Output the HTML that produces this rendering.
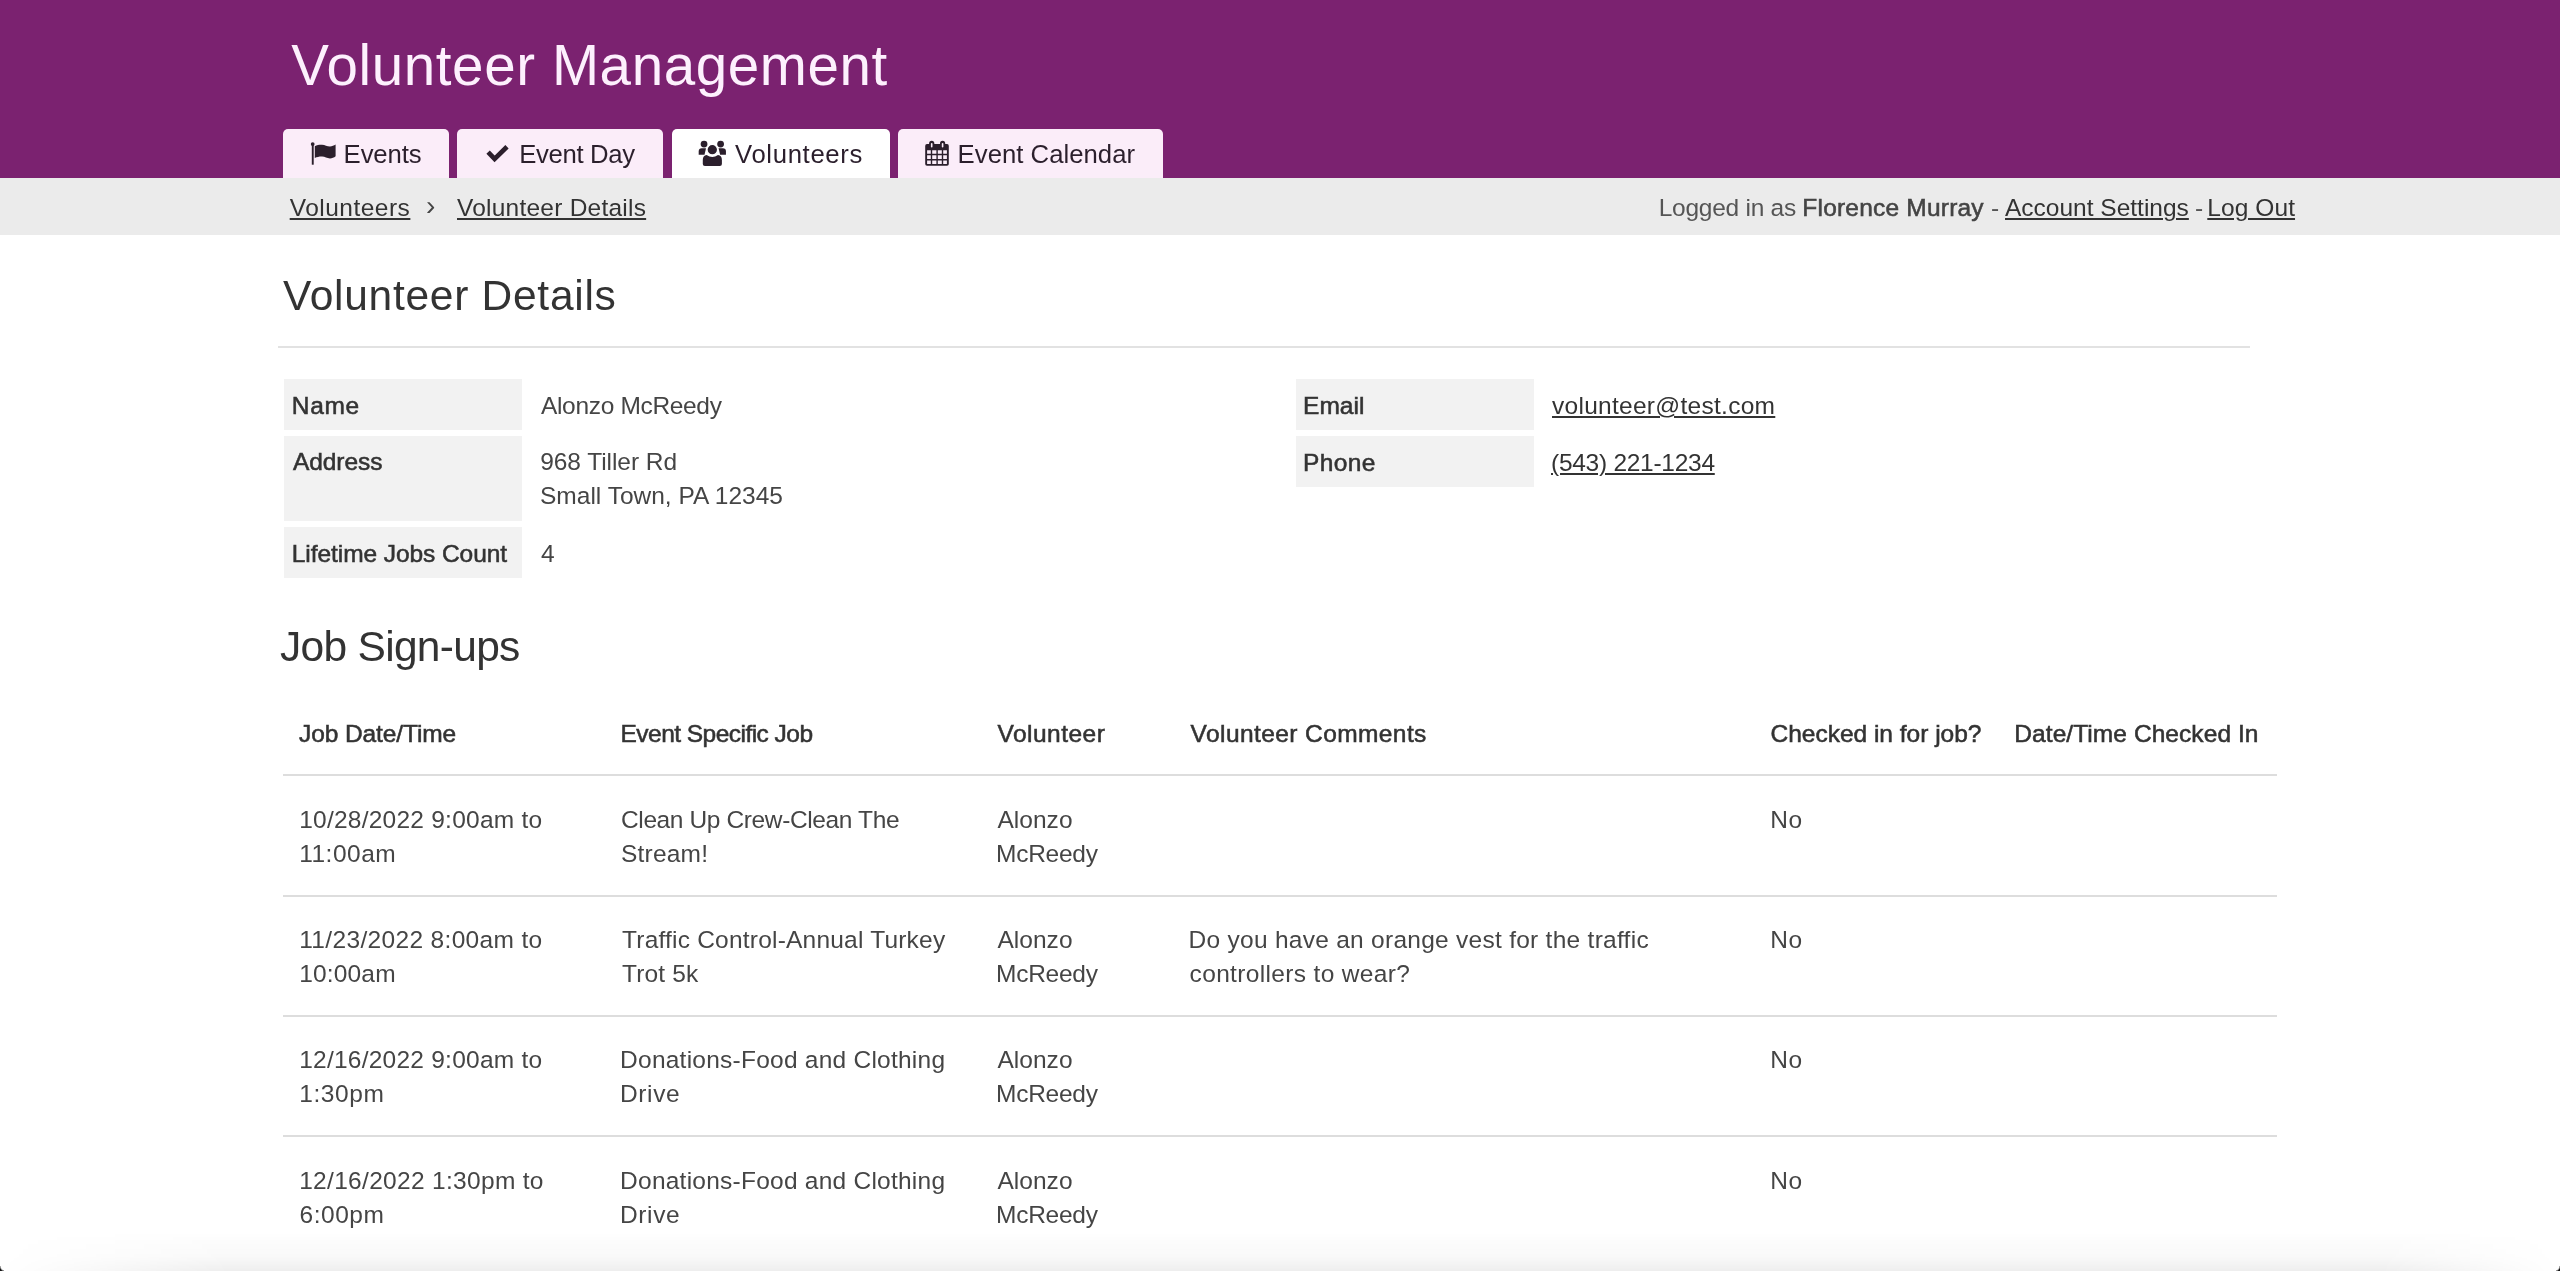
<!DOCTYPE html>
<html lang="en">
<head>
<meta charset="utf-8">
<title>Volunteer Management - Volunteer Details</title>
<style>
*{box-sizing:border-box;}
html,body{margin:0;padding:0;}
body{width:2560px;height:1271px;overflow:hidden;background:#fff;position:relative;
  font-family:"Liberation Sans",sans-serif;font-size:24.5px;line-height:34px;color:#454545;}
a{color:#333;text-decoration:underline;text-decoration-thickness:2px;text-underline-offset:2px;}
.sb{-webkit-text-stroke:.55px currentColor;}
.hdr,.crumb,main{will-change:transform;}
.hdr{position:absolute;left:0;top:0;width:2560px;height:178px;background:#7b2270;}
.hdr h1{position:absolute;top:30.5px;margin:0;font-weight:400;font-size:56.5px;line-height:70px;color:#fdf0fd;white-space:nowrap;}
.tabs{position:absolute;left:0;top:129px;height:49px;margin:0;padding:0;list-style:none;}
.tabs li{position:absolute;top:0;height:49px;background:#fbedf9;border-radius:5px 5px 0 0;color:#2b1f2c;font-size:25.7px;line-height:49px;white-space:nowrap;}
.tabs li.on{background:#fff;}
.tabs li a{position:absolute;top:1px;color:inherit;text-decoration:none;}
.tabs li svg{position:absolute;display:block;}
.crumb{position:absolute;left:0;top:178px;width:2560px;height:57px;background:#ebebeb;}
.crumb>*{position:absolute;top:13px;white-space:nowrap;}
.crumb .g{color:#555;}
.crumb .n{color:#444;}
h2{position:absolute;margin:0;font-weight:400;font-size:42.5px;line-height:50px;color:#333;white-space:nowrap;}
hr{position:absolute;left:278px;top:346px;width:1972px;height:2px;border:0;margin:0;background:#e2e2e2;}
table.kv{position:absolute;border-collapse:separate;border-spacing:0 6px;}
table.kv th{background:#f2f2f2;color:#333;font-weight:400;text-align:left;vertical-align:top;padding:9px 0 7px 10px;white-space:nowrap;width:238px;}
table.kv td{padding:9px 0 7px 19px;vertical-align:top;white-space:nowrap;}
table.kv tr:nth-child(1)>*{padding-top:10px;}
table.kv tr:nth-child(2)>*{padding-bottom:8px;}
table.kv.a tr:nth-child(3)>*{padding-top:10px;}
table.kv.b tr:nth-child(2)>*{padding:10px 0 7px 10px;}
table.kv.b tr:nth-child(2)>td{padding-left:19px;}
table.jobs{position:absolute;left:283px;top:690px;width:1994px;border-collapse:separate;border-spacing:0;table-layout:fixed;}
table.jobs th{font-weight:400;color:#333;text-align:left;height:86px;padding:27px 0 0 0;border-bottom:2px solid #ddd;white-space:nowrap;vertical-align:top;}
table.jobs td{padding:26px 0 0 0;border-top:2px solid #ddd;vertical-align:top;white-space:nowrap;height:120px;}
table.jobs tbody tr:nth-child(1) td{border-top:0;height:119px;padding-top:27px}
table.jobs tbody tr:nth-child(4) td{padding-top:27px}
.fade{position:absolute;left:0;top:1232px;width:2560px;height:39px;background:linear-gradient(to bottom,rgba(0,0,0,0) 0,rgba(0,0,0,.012) 25%,rgba(0,0,0,.024) 62%,rgba(0,0,0,.065) 100%);-webkit-mask-image:linear-gradient(to right,transparent 0,#000 9%,#000 93%,transparent 100%);mask-image:linear-gradient(to right,transparent 0,#000 9%,#000 93%,transparent 100%);}
.cnr{position:absolute;bottom:0;width:4px;height:5px;background:radial-gradient(ellipse at 100% 0,rgba(0,0,0,0) 3px,#111 4.5px);}
</style>
</head>
<body>
<header class="hdr">
  <h1 style="left:291.3px"><span style="letter-spacing:.62px">Volunteer Management</span></h1>
  <ul class="tabs">
    <li style="left:283px;width:166px"><svg style="left:27px;top:13px" width="27" height="24" viewBox="0 0 27 24"><g fill="#2b1f2c"><circle cx="2.7" cy="2.1" r="1.9"/><rect x="1.8" y="2.3" width="1.9" height="20.4"/><path d="M4.8,4.2C7,3 9.5,2.6 12,2.7C15,2.8 17,4.4 20,4.4C22,4.4 24,3.8 25.6,2.6L25.6,14.2C24,15.6 22,16.4 20,16.4C17,16.4 15,14.6 12,14.5C9.5,14.4 7,15 4.8,15.9Z"/></g></svg><a href="#" style="left:60.6px"><span style="letter-spacing:-.1px">Events</span></a></li>
    <li style="left:457px;width:206px"><svg style="left:27px;top:13px" width="28" height="24" viewBox="0 0 28 24"><polyline points="4.1,10.1 10.6,16.9 23,4.7" fill="none" stroke="#2b1f2c" stroke-width="4.7" stroke-linejoin="miter"/></svg><a href="#" style="left:62.3px"><span style="letter-spacing:-.34px">Event Day</span></a></li>
    <li class="on" style="left:672px;width:218px"><svg style="left:24px;top:10px" width="32" height="29" viewBox="0 0 32 29"><g fill="#2b1f2c"><circle cx="8.05" cy="5.1" r="3.4"/><circle cx="24.6" cy="5.1" r="3.4"/><path d="M2.7,15.7L2.7,12.4Q2.7,9.3 5.8,9.3L10,9.3L8.5,15.7Z"/><path d="M29.95,15.7L29.95,12.4Q29.95,9.3 26.85,9.3L22.6,9.3L24.1,15.7Z"/><path d="M8.9,27.1Q6.8,27.1 6.8,25L6.8,21Q6.8,16.4 10.6,15.9Q16.3,20 22,15.9Q25.9,16.4 25.9,21L25.9,25Q25.9,27.1 23.8,27.1Z"/></g><circle cx="16.3" cy="10.7" r="5.3" fill="#2b1f2c" stroke="#fff" stroke-width="1.3"/></svg><a href="#" style="left:63px"><span style="letter-spacing:.66px">Volunteers</span></a></li>
    <li style="left:898px;width:265px"><svg style="left:25px;top:10px" width="28" height="28" viewBox="0 0 28 28"><g fill="#2b1f2c"><rect x="2.2" y="5.1" width="23.6" height="21.7" rx="1.8"/><rect x="6.1" y="1.8" width="5.2" height="7" rx="2.6"/><rect x="17" y="1.8" width="5.2" height="7" rx="2.6"/></g><g fill="#fbedf9"><path d="M4.1,11.2H7.8V14.8H4.1ZM9.2,11.2H13.4V14.8H9.2ZM14.8,11.2H18.8V14.8H14.8ZM20.2,11.2H23.9V14.8H20.2ZM4.1,16.2H7.8V20.1H4.1ZM9.2,16.2H13.4V20.1H9.2ZM14.8,16.2H18.8V20.1H14.8ZM20.2,16.2H23.9V20.1H20.2ZM4.1,21.5H7.8V24.9H4.1ZM9.2,21.5H13.4V24.9H9.2ZM14.8,21.5H18.8V24.9H14.8ZM20.2,21.5H23.9V24.9H20.2Z"/><rect x="7.9" y="4" width="1.6" height="4.5" rx=".8"/><rect x="18.8" y="4" width="1.6" height="4.5" rx=".8"/></g></svg><a href="#" style="left:59.6px"><span style="letter-spacing:.03px">Event Calendar</span></a></li>
  </ul>
</header>
<nav class="crumb">
  <a href="#" style="left:289.7px"><span style="letter-spacing:.49px">Volunteers</span></a>
  <span style="left:426px;top:11px;font-size:28px;color:#444">&rsaquo;</span>
  <a href="#" style="left:457px"><span style="letter-spacing:.23px">Volunteer Details</span></a>
  <span class="g" style="left:1658.7px"><span style="letter-spacing:-.25px">Logged in as</span></span>
  <span class="n sb" style="left:1802.3px"><span style="letter-spacing:.21px">Florence Murray</span></span>
  <span class="g" style="left:1991px">-</span>
  <a href="#" style="left:2005px"><span>Account Settings</span></a>
  <span class="g" style="left:2195px">-</span>
  <a href="#" style="left:2207.3px"><span style="letter-spacing:.08px">Log Out</span></a>
</nav>
<main>
  <h2 style="left:283px;top:271px"><span style="letter-spacing:.72px">Volunteer Details</span></h2>
  <hr>
  <table class="kv a" style="left:284px;top:373px">
    <tr><th><span class="sb" style="letter-spacing:.67px;position:relative;left:-2.2px">Name</span></th><td><span style="letter-spacing:-.33px">Alonzo McReedy</span></td></tr>
    <tr><th><span class="sb" style="letter-spacing:-.08px;position:relative;left:-1px">Address</span></th><td><span style="letter-spacing:-.06px;position:relative;left:-.8px">968 Tiller Rd</span><br><span style="position:relative;left:-1px">Small Town, PA 12345</span></td></tr>
    <tr><th><span class="sb" style="letter-spacing:-.07px;position:relative;left:-2.2px">Lifetime Jobs Count</span></th><td><span>4</span></td></tr>
  </table>
  <table class="kv b" style="left:1296px;top:373px">
    <tr><th><span class="sb" style="letter-spacing:.06px;position:relative;left:-3px">Email</span></th><td><a href="#"><span style="letter-spacing:.28px;position:relative;left:-1px">volunteer@test.com</span></a></td></tr>
    <tr><th><span class="sb" style="letter-spacing:.38px;position:relative;left:-3px">Phone</span></th><td><a href="#"><span style="letter-spacing:-.27px;position:relative;left:-2px">(543) 221-1234</span></a></td></tr>
  </table>
  <h2 style="left:280px;top:622px"><span style="letter-spacing:-.7px">Job Sign-ups</span></h2>
  <table class="jobs">
    <colgroup><col style="width:322px"><col style="width:376px"><col style="width:193px"><col style="width:580px"><col style="width:245px"><col style="width:278px"></colgroup>
    <thead><tr><th><span class="sb" style="letter-spacing:-.1px;position:relative;left:16px">Job Date/Time</span></th><th><span class="sb" style="letter-spacing:-.53px;position:relative;left:15.5px">Event Specific Job</span></th><th><span class="sb" style="letter-spacing:.47px;position:relative;left:16.5px">Volunteer</span></th><th><span class="sb" style="letter-spacing:.41px;position:relative;left:16.6px">Volunteer Comments</span></th><th><span class="sb" style="letter-spacing:-.01px;position:relative;left:16.5px">Checked in for job?</span></th><th><span class="sb" style="letter-spacing:.07px;position:relative;left:15.3px">Date/Time Checked In</span></th></tr></thead>
    <tbody>
      <tr><td><span style="letter-spacing:.24px;position:relative;left:16.2px">10/28/2022 9:00am to</span><br><span style="letter-spacing:.5px;position:relative;left:16.2px">11:00am</span></td><td><span style="letter-spacing:-.38px;position:relative;left:16px">Clean Up Crew-Clean The</span><br><span style="letter-spacing:.21px;position:relative;left:16px">Stream!</span></td><td><span style="letter-spacing:.02px;position:relative;left:16.5px">Alonzo</span><br><span style="letter-spacing:-.25px;position:relative;left:15px">McReedy</span></td><td></td><td><span style="letter-spacing:.5px;position:relative;left:16.2px">No</span></td><td></td></tr>
      <tr><td><span style="letter-spacing:.34px;position:relative;left:16.2px">11/23/2022 8:00am to</span><br><span style="letter-spacing:.17px;position:relative;left:16.2px">10:00am</span></td><td><span style="letter-spacing:.21px;position:relative;left:17px">Traffic Control-Annual Turkey</span><br><span style="letter-spacing:.17px;position:relative;left:17px">Trot 5k</span></td><td><span style="letter-spacing:.02px;position:relative;left:16.5px">Alonzo</span><br><span style="letter-spacing:-.25px;position:relative;left:15px">McReedy</span></td><td><span style="letter-spacing:.27px;position:relative;left:14.6px">Do you have an orange vest for the traffic</span><br><span style="letter-spacing:.34px;position:relative;left:15.6px">controllers to wear?</span></td><td><span style="letter-spacing:.5px;position:relative;left:16.2px">No</span></td><td></td></tr>
      <tr><td><span style="letter-spacing:.24px;position:relative;left:16.2px">12/16/2022 9:00am to</span><br><span style="letter-spacing:.6px;position:relative;left:16.2px">1:30pm</span></td><td><span style="letter-spacing:.24px;position:relative;left:15.1px">Donations-Food and Clothing</span><br><span style="letter-spacing:.62px;position:relative;left:15px">Drive</span></td><td><span style="letter-spacing:.02px;position:relative;left:16.5px">Alonzo</span><br><span style="letter-spacing:-.25px;position:relative;left:15px">McReedy</span></td><td></td><td><span style="letter-spacing:.5px;position:relative;left:16.2px">No</span></td><td></td></tr>
      <tr><td><span style="letter-spacing:.31px;position:relative;left:16.2px">12/16/2022 1:30pm to</span><br><span style="letter-spacing:.54px;position:relative;left:16.5px">6:00pm</span></td><td><span style="letter-spacing:.24px;position:relative;left:15.1px">Donations-Food and Clothing</span><br><span style="letter-spacing:.62px;position:relative;left:15px">Drive</span></td><td><span style="letter-spacing:.02px;position:relative;left:16.5px">Alonzo</span><br><span style="letter-spacing:-.25px;position:relative;left:15px">McReedy</span></td><td></td><td><span style="letter-spacing:.5px;position:relative;left:16.2px">No</span></td><td></td></tr>
    </tbody>
  </table>
</main>
<div class="fade"></div>
<div class="cnr" style="left:0"></div>
<div class="cnr" style="right:0;transform:scaleX(-1)"></div>
</body>
</html>
